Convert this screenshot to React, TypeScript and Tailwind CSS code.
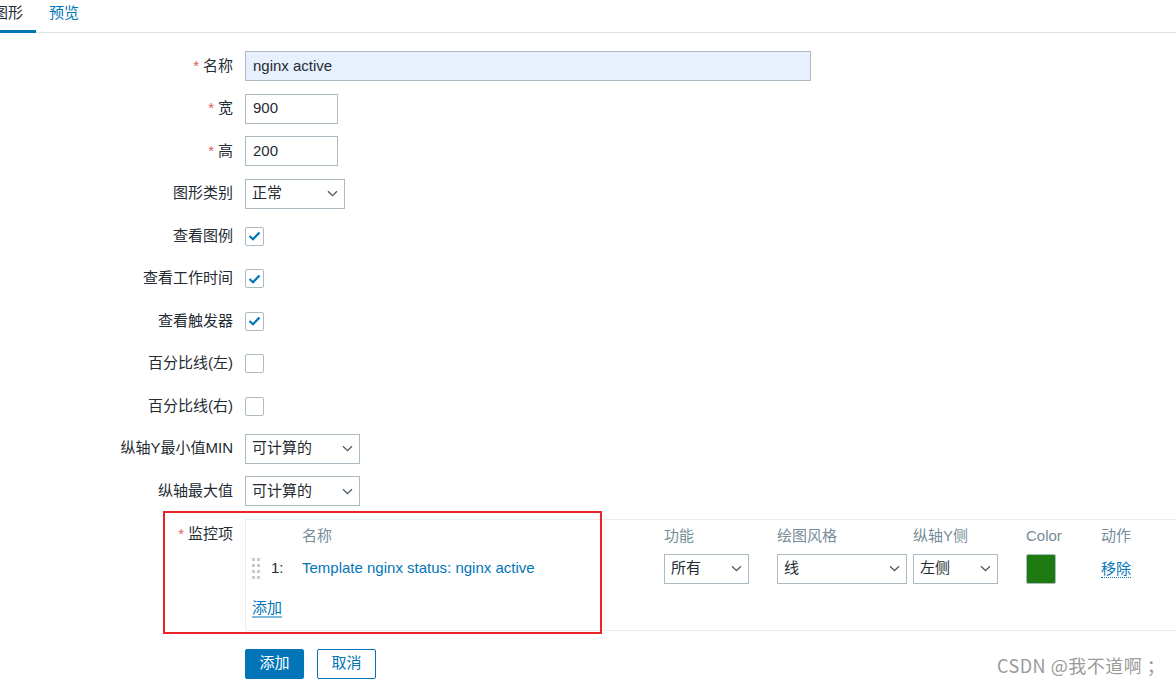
import React from 'react';

const FONT = { fontFamily: '"Liberation Sans", Arial, "Noto Sans CJK SC", sans-serif' };

const Chevron = () => (
  <svg width="11" height="7" viewBox="0 0 11 7" className="shrink-0">
    <path d="M1 1.2 L5.5 5.6 L10 1.2" fill="none" stroke="#4a5a63" strokeWidth="1.3" />
  </svg>
);

const Select: React.FC<{ value: string; width: string }> = ({ value, width }) => (
  <div className={`${width} h-[30px] border border-[#acbbc2] bg-white flex items-center justify-between pl-[6px] pr-[6px] text-[15px] text-[#1f2c33]`}>
    <span>{value}</span>
    <Chevron />
  </div>
);

const Checkbox: React.FC<{ checked?: boolean }> = ({ checked }) => (
  <div className="w-[19px] h-[19px] border border-[#acbbc2] rounded-[2px] bg-white flex items-center justify-center">
    {checked && (
      <svg width="13" height="10" viewBox="0 0 13 10">
        <path d="M1.5 5 L5 8.2 L11.5 1.5" fill="none" stroke="#0275b8" strokeWidth="2.2" />
      </svg>
    )}
  </div>
);

const Row: React.FC<{ label: string; required?: boolean; children: React.ReactNode }> = ({ label, required, children }) => (
  <div className="flex items-center h-[30px]">
    <div className="w-[233px] text-right text-[15px] text-[#1f2c33] whitespace-nowrap">
      {required && <span className="text-[#e45959] mr-[4px]">*</span>}
      {label}
    </div>
    <div className="ml-[12px] flex items-center">{children}</div>
  </div>
);

const DragHandle = () => (
  <div className="grid grid-cols-2 gap-x-[2px] gap-y-[3px] w-[8px]">
    {Array.from({ length: 8 }).map((_, i) => (
      <div key={i} className="w-[3px] h-[3px] bg-[#c4ccd1]" />
    ))}
  </div>
);

export default function App() {
  return (
    <div className="w-[1176px] h-[684px] bg-white relative overflow-hidden text-[#1f2c33]" style={FONT}>
      {/* tabs */}
      <div className="flex h-[33px] border-b border-[#dfe4e7]">
        <div className="ml-[-20px] px-[13px] h-[33px] flex items-center text-[15px] text-[#1f2c33] border-b-[3px] border-[#0275b8] pb-[3px]">图形</div>
        <div className="px-[13px] h-[33px] flex items-center text-[15px] text-[#0275b8] pb-[6px]">预览</div>
      </div>

      <div className="pt-[18px] flex flex-col gap-[12.5px]">
        <Row label="名称" required>
          <div className="w-[566px] h-[30px] border border-[#acbbc2] bg-[#e8f0fe] flex items-center px-[7px] text-[15px]">nginx active</div>
        </Row>
        <Row label="宽" required>
          <div className="w-[93px] h-[30px] border border-[#acbbc2] bg-white flex items-center px-[7px] text-[15px]">900</div>
        </Row>
        <Row label="高" required>
          <div className="w-[93px] h-[30px] border border-[#acbbc2] bg-white flex items-center px-[7px] text-[15px]">200</div>
        </Row>
        <Row label="图形类别">
          <Select value="正常" width="w-[100px]" />
        </Row>
        <Row label="查看图例">
          <Checkbox checked />
        </Row>
        <Row label="查看工作时间">
          <Checkbox checked />
        </Row>
        <Row label="查看触发器">
          <Checkbox checked />
        </Row>
        <Row label="百分比线(左)">
          <Checkbox />
        </Row>
        <Row label="百分比线(右)">
          <Checkbox />
        </Row>
        <Row label="纵轴Y最小值MIN">
          <Select value="可计算的" width="w-[115px]" />
        </Row>
        <Row label="纵轴最大值">
          <Select value="可计算的" width="w-[115px]" />
        </Row>

        {/* items */}
        <div className="flex items-start">
          <div className="w-[233px] text-right text-[15px] pt-[4px] whitespace-nowrap">
            <span className="text-[#e45959] mr-[4px]">*</span>监控项
          </div>
          <div className="ml-[12px] flex-1 h-[112px] border-t border-b border-l border-[#ebeef0] pl-[6px] text-[15px]">
            <div className="flex h-[28px] items-end text-[#768d99]">
              <div className="w-[50px]" />
              <div className="w-[362px]">名称</div>
              <div className="w-[113px]">功能</div>
              <div className="w-[136px]">绘图风格</div>
              <div className="w-[113px]">纵轴Y侧</div>
              <div className="w-[75px]">Color</div>
              <div>动作</div>
            </div>
            <div className="flex items-center h-[30px] mt-[6px]">
              <div className="w-[19px] flex items-center"><DragHandle /></div>
              <div className="w-[31px] text-[#1f2c33]">1:</div>
              <div className="w-[362px] text-[#0275b8]">Template nginx status: nginx active</div>
              <div className="w-[113px]"><Select value="所有" width="w-[85px]" /></div>
              <div className="w-[136px]"><Select value="线" width="w-[130px]" /></div>
              <div className="w-[113px]"><Select value="左侧" width="w-[85px]" /></div>
              <div className="w-[75px]">
                <div className="w-[30px] h-[30px] bg-[#1e7b12] border border-[#acbbc2] rounded-[2px]" />
              </div>
              <div className="text-[#0275b8] border-b border-dotted border-[#0275b8] leading-[17px]">移除</div>
            </div>
            <div className="mt-[15px] inline-block text-[#0275b8] border-b-2 border-[#7fbadc] leading-[17px]">添加</div>
          </div>
        </div>
      </div>

      <div className="flex gap-[13px] ml-[245px] mt-[18px]">
        <div className="w-[59px] h-[30px] bg-[#0275b8] border border-[#0275b8] rounded-[2px] text-white text-[15px] flex items-center justify-center">添加</div>
        <div className="w-[59px] h-[30px] bg-white border border-[#0275b8] rounded-[2px] text-[#0275b8] text-[15px] flex items-center justify-center">取消</div>
      </div>

      {/* red annotation box */}
      <div className="absolute left-[163px] top-[511px] w-[439px] h-[123px] border-2 border-[#e8242a] pointer-events-none" />

      {/* watermark */}
      <div className="absolute left-[997px] top-[652px] text-[18px] tracking-[0.5px] text-[#9a9a9a] whitespace-nowrap" style={{ fontFamily: '"Noto Sans CJK SC", "Liberation Sans", sans-serif' }}>
        CSDN @我不道啊 ；
      </div>
    </div>
  );
}
